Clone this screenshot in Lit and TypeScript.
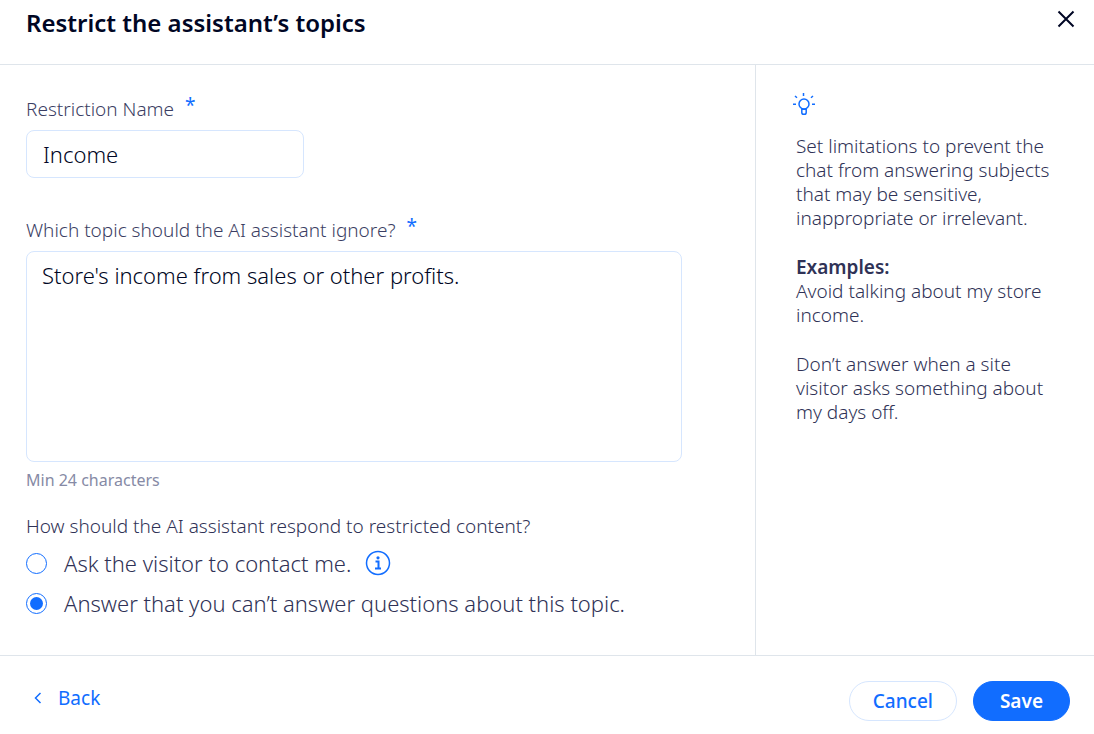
import { LitElement, html, css } from "lit";
import { customElement, state } from "lit/decorators.js";

@customElement("app-root")
export class AppRoot extends LitElement {
  static styles = css`
    :host {
      display: flex;
      flex-direction: column;
      min-height: 100vh;
      background: #fff;
      color: #2f3256;
      font-family: "Noto Sans", "Open Sans", sans-serif;
      font-size: 19px;
      font-weight: 300;
      line-height: 24px;
    }
    *, *::before { box-sizing: border-box; }
    button, input, textarea { font: inherit; margin: 0; }
    button { cursor: pointer; }
    svg { display: block; fill: none; stroke: currentColor; }
    .header {
      display: flex;
      justify-content: space-between;
      align-items: flex-start;
      padding: 7px 16px 25px 26px;
      border-bottom: 1px solid #dfe5eb;
    }
    .title {
      margin: 0;
      color: #000624;
      font-size: 24px;
      line-height: 32px;
      font-weight: 600;
    }
    .close { padding: 1px 0 0; border: 0; background: none; color: #000624; }
    .body { display: flex; flex: 1; }
    .form { flex: 1; min-width: 0; padding: 32px 73px 32px 26px; }
    .label { display: flex; gap: 11px; margin-bottom: 9px; color: #3b3e63; }
    .star { color: #116dff; font-weight: 400; line-height: 16px; }
    .field {
      display: block;
      border: 1px solid #d6e6fe;
      border-radius: 8px;
      outline: none;
      background: #fff;
      color: #000624;
      font-size: 22px;
      line-height: 28px;
    }
    .field:focus { border-color: #116dff; }
    .name { width: 278px; height: 48px; padding: 0 16px; margin-bottom: 40px; }
    .topic { width: 100%; height: 211px; padding: 9px 15px; resize: none; }
    .hint { margin: 6px 0 22px; color: #868aa5; font-size: 16px; font-weight: 400; }
    .group { margin: 0; padding: 0; border: 0; }
    .legend { padding: 0; margin-bottom: 11px; }
    .option {
      display: flex;
      align-items: center;
      gap: 14px;
      font-size: 22px;
      line-height: 28px;
    }
    .option label { display: flex; align-items: center; gap: 17px; }
    .options { display: grid; gap: 12px; }
    .radio {
      appearance: none;
      display: grid;
      place-items: center;
      flex: none;
      width: 21px;
      height: 21px;
      border: 1px solid #116dff;
      border-radius: 50%;
      background: #fff;
    }
    .radio:checked::before {
      content: "";
      width: 13px;
      height: 13px;
      border-radius: 50%;
      background: #116dff;
    }
    .info { padding: 0; border: 0; background: none; color: #116dff; }
    .tips {
      width: 339px;
      padding: 26px 32px 32px 40px;
      border-left: 1px solid #dfe5eb;
    }
    .bulb { display: block; margin: 0 0 17px -4px; color: #116dff; }
    .tips p { margin: 0 0 25px; }
    .strong { font-weight: 600; }
    .footer {
      display: flex;
      justify-content: space-between;
      align-items: center;
      padding: 25px 24px 13px 32px;
      border-top: 1px solid #dfe5eb;
    }
    .back {
      display: flex;
      align-items: center;
      gap: 14px;
      padding: 0 0 6px;
      border: 0;
      background: none;
      color: #116dff;
      font-weight: 400;
    }
    .actions { display: flex; gap: 16px; }
    .pill {
      height: 40px;
      padding: 0 23px;
      border: 1px solid #d6e6fe;
      border-radius: 20px;
      background: #fff;
      color: #116dff;
      font-weight: 500;
    }
    .primary { padding: 0 26px; border-color: #116dff; background: #116dff; color: #fff; font-weight: 600; }
  `;

  @state() private answer = "decline";

  private pick(e: Event) {
    this.answer = (e.target as HTMLInputElement).value;
  }

  private radio(id: string) {
    return html`<input class="radio" type="radio" name="answer" id=${id} value=${id}
      .checked=${this.answer === id} @change=${this.pick} />`;
  }

  render() {
    return html`
      <header class="header">
        <h1 class="title">Restrict the assistant’s topics</h1>
        <button class="close" aria-label="Close">
          <svg width="24" height="24" viewBox="0 0 24 24" stroke-width="2"><path d="M4.5 3.5l15 15M19.5 3.5l-15 15" /></svg>
        </button>
      </header>
      <div class="body">
        <main class="form">
          <label class="label" for="name">Restriction Name <span class="star">*</span></label>
          <input class="field name" id="name" type="text" .value=${"Income"} />
          <label class="label" for="topic">Which topic should the AI assistant ignore? <span class="star">*</span></label>
          <textarea class="field topic" id="topic" aria-describedby="hint" .value=${"Store's income from sales or other profits."}></textarea>
          <p class="hint" id="hint">Min 24 characters</p>
          <fieldset class="group">
            <legend class="legend">How should the AI assistant respond to restricted content?</legend>
            <div class="options">
              <div class="option">
                <label for="contact">${this.radio("contact")}Ask the visitor to contact me.</label>
                <button class="info" aria-label="More information">
                  <svg width="26" height="26" viewBox="0 0 26 26">
                    <circle cx="13" cy="13" r="11.5" stroke-width="1.5" />
                    <path d="M10.5 11.5h3v6.5M10 18.5h6" stroke-width="2" />
                    <circle cx="13" cy="7.8" r="1.6" fill="currentColor" stroke="none" />
                  </svg>
                </button>
              </div>
              <div class="option">
                <label for="decline">${this.radio("decline")}Answer that you can’t answer questions about this topic.</label>
              </div>
            </div>
          </fieldset>
        </main>
        <aside class="tips">
          <svg class="bulb" width="24" height="26" viewBox="0 0 24 26" stroke-width="1.5">
            <circle cx="12" cy="13" r="5" />
            <path d="M9.8 17.5v4q0 1.8 1.8 1.8h.8q1.8 0 1.8-1.8v-4M9.8 18.3h4.4M11.5 2v3M1 13.3h3M20 13.3h3M3 5l2 1.8M21 5l-2 1.8" />
          </svg>
          <p>Set limitations to prevent the chat from answering subjects that may be sensitive, inappropriate or irrelevant.</p>
          <p><span class="strong">Examples:</span><br />Avoid talking about my store income.</p>
          <p>Don’t answer when a site visitor asks something about my days off.</p>
        </aside>
      </div>
      <footer class="footer">
        <button class="back">
          <svg width="12" height="14" viewBox="0 0 12 14" stroke-width="1.5"><path d="M8.5 2L3.5 7l5 5" /></svg>
          Back
        </button>
        <div class="actions">
          <button class="pill">Cancel</button>
          <button class="pill primary">Save</button>
        </div>
      </footer>
    `;
  }
}
